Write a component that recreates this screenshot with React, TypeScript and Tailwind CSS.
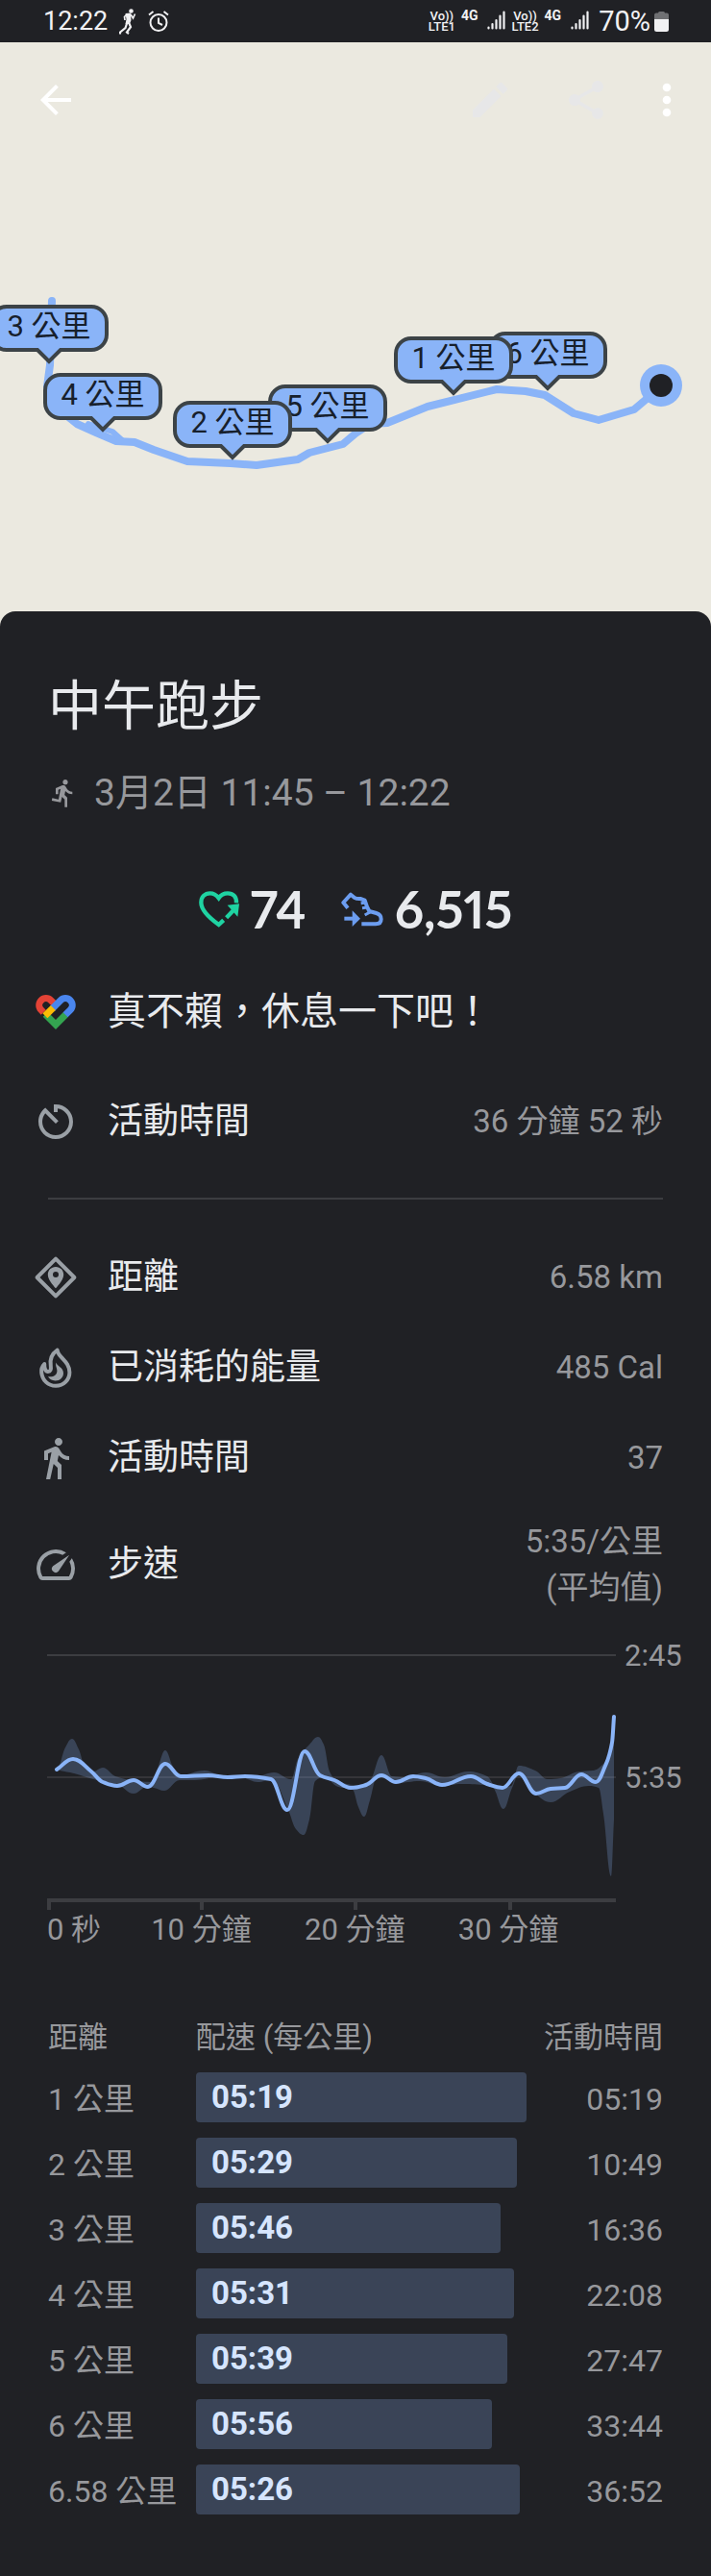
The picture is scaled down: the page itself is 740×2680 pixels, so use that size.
import { MdArrowBack, MdDirectionsRun, MdDirectionsWalk, MdEdit, MdMoreVert, MdShare, MdSpeed } from "react-icons/md";

type Point = [number, number];

// listed back to front
const markers = [
  { km: 5, x: 341, y: 462 },
  { km: 2, x: 242, y: 479 },
  { km: 6, x: 570, y: 407 },
  { km: 1, x: 472, y: 412 },
  { km: 3, x: 51, y: 379 },
  { km: 4, x: 107, y: 450 },
];

const splits = [
  { distance: "1 公里", pace: "05:19", time: "05:19", bar: 344 },
  { distance: "2 公里", pace: "05:29", time: "10:49", bar: 334 },
  { distance: "3 公里", pace: "05:46", time: "16:36", bar: 317 },
  { distance: "4 公里", pace: "05:31", time: "22:08", bar: 331 },
  { distance: "5 公里", pace: "05:39", time: "27:47", bar: 324 },
  { distance: "6 公里", pace: "05:56", time: "33:44", bar: 308 },
  { distance: "6.58 公里", pace: "05:26", time: "36:52", bar: 337 },
];
const longestBar = 344;

const paceLine: Point[] = [
  [10, 121], [27, 110], [46, 123], [58, 134], [73, 138], [90, 132], [105, 139], [123, 115], [139, 128],
  [168, 127], [188, 129], [206, 128], [233, 131], [250, 163], [268, 102], [284, 127], [299, 132], [316, 140],
  [332, 137], [348, 127], [363, 134], [381, 128], [394, 130], [411, 137], [441, 128], [458, 136], [474, 140],
  [491, 125], [509, 146], [524, 141], [539, 140], [556, 126], [571, 134], [581, 117], [588, 93], [590, 66],
];

const paceHigh: Point[] = [
  [13, 117], [19, 98], [26, 89], [33, 100], [39, 117], [48, 123], [58, 119], [71, 128], [88, 132], [111, 134],
  [116, 117], [123, 101], [131, 118], [138, 127], [164, 122], [184, 128], [218, 128], [236, 124], [254, 131],
  [261, 110], [273, 95], [282, 87], [288, 95], [294, 123], [301, 132], [321, 137], [336, 132], [348, 106],
  [359, 128], [374, 129], [394, 124], [414, 129], [438, 123], [458, 128], [468, 140], [483, 138], [491, 117],
  [508, 122], [521, 131], [534, 130], [554, 123], [568, 122], [579, 115], [590, 93],
];

const paceLow: Point[] = [
  [13, 122], [28, 125], [48, 131], [74, 137], [90, 146], [104, 139], [111, 140], [122, 143], [138, 132],
  [154, 132], [178, 129], [204, 130], [219, 134], [234, 132], [251, 163], [259, 183], [267, 189], [273, 173],
  [279, 133], [288, 129], [303, 139], [318, 142], [324, 160], [330, 170], [336, 153], [343, 130], [354, 129],
  [364, 135], [388, 133], [411, 138], [431, 136], [454, 137], [464, 140], [475, 162], [484, 140], [491, 127],
  [508, 146], [524, 155], [544, 144], [564, 138], [574, 140], [579, 167], [587, 232], [590, 173],
];

// Monotone cubic through the points, flat at every local extreme
function curve(points: Point[]) {
  const slope = (i: number) =>
    (points[i + 1][1] - points[i][1]) / (points[i + 1][0] - points[i][0] || 1);
  const tangents = points.map((_, i) => {
    if (i === 0) return slope(0);
    if (i === points.length - 1) return slope(i - 1);
    const a = slope(i - 1);
    const b = slope(i);
    return a * b <= 0 ? 0 : (2 * a * b) / (a + b);
  });
  return points
    .slice(1)
    .map(([x, y], i) => {
      const [px, py] = points[i];
      const h = (x - px) / 2.5;
      return `C${px + h},${py + tangents[i] * h} ${x - h},${y - tangents[i + 1] * h} ${x},${y}`;
    })
    .join(" ");
}

function band(high: Point[], low: Point[]) {
  const back = [...low].reverse();
  return `M${high[0].join(",")} ${curve(high)} L${back[0].join(",")} ${curve(back)}Z`;
}

const AlarmIcon = () => (
  <svg viewBox="0 0 22 22" className="size-[22px]" fill="none" stroke="currentColor" strokeWidth="2" aria-hidden="true">
    <circle cx="11" cy="12.5" r="8.5" />
    <path d="M11 7.5V13l4 2M1 4.5 5.5 1M21 4.5 16.5 1" />
  </svg>
);

const StatusRunner = () => (
  <svg viewBox="0 0 18 27" className="h-[27px] w-[18px]" fill="none" stroke="currentColor" aria-hidden="true">
    <circle cx="12.5" cy="2.5" r="2.3" fill="currentColor" stroke="none" />
    <path d="M6.500 5 12 4.500 12.500 12 11 16 6.500 16 7.500 11z" fill="currentColor" stroke="none" />
    <path d="M8 6 5.500 8.500 6 12M12 6l2.500 4 2-4.500" strokeWidth="1.700" />
    <path d="M8 15.500 6.500 20 1 24.500v2M10.500 15.500l1.500 3.500-4 5.500 2 1.500" strokeWidth="2.200" />
  </svg>
);

const SignalBars = () => (
  <svg viewBox="0 0 19 20" className="h-5 w-[19px]" stroke="currentColor" strokeWidth="2.200" strokeLinecap="round" aria-hidden="true">
    <path d="M1.500 17.500v1M5.500 14v4.500M9.500 10v8.500M13.500 5.500v13M17.500 1.500v17" />
  </svg>
);

const Sim = ({ name }: { name: string }) => (
  <div className="flex">
    <div className="text-center text-[13px] leading-[11px] font-medium">
      <div>Vo))</div>
      <div>{name}</div>
    </div>
    <div className="mr-2.5 ml-1.5 text-[14px] leading-[11px] font-bold">4G</div>
    <SignalBars />
  </div>
);

const StatusBar = () => (
  <header className="flex h-11 items-center justify-between bg-[#202125] pr-11 pl-[45px] text-[#f1f1f3]">
    <div className="flex items-center gap-3">
      <span className="text-[27px] leading-8">12:22</span>
      <span className="flex items-center gap-3">
        <StatusRunner />
        <AlarmIcon />
      </span>
    </div>
    <div className="flex items-center gap-1.5">
      <Sim name="LTE1" />
      <Sim name="LTE2" />
      <span className="ml-1 flex items-center gap-1 text-[29px] leading-8">
        70%
        <svg viewBox="0 0 15 22" className="h-[22px] w-[15px]" aria-hidden="true">
          <path d="M4 2.500Q4 1 5.500 1h4Q11 1 11 2.500h2q2 0 2 2V10H0V4.500q0-2 2-2z" fill="#6f7073" />
          <path d="M0 9h15v10.500q0 2.500-2.500 2.500h-10Q0 22 0 19.500z" fill="currentColor" />
        </svg>
      </span>
    </div>
  </header>
);

const KmMarker = ({ km, x, y }: { km: number; x: number; y: number }) => (
  <div className="absolute h-[62px] w-[124px] -translate-x-1/2 -translate-y-full" style={{ left: x, top: y - 44 }}>
    <svg viewBox="0 0 124 62" className="absolute inset-0 size-full" aria-hidden="true">
      <path
        d="M18 2H106A16 16 0 0 1 122 18V31A16 16 0 0 1 106 47H74L62 59 50 47H18A16 16 0 0 1 2 31V18A16 16 0 0 1 18 2Z"
        fill="#8ab4f8"
        stroke="#3c4347"
        strokeWidth="4"
      />
    </svg>
    <span className="relative block text-center text-[31px] leading-[46px] text-[#17202c]">{km} 公里</span>
  </div>
);

const RouteMap = () => (
  <section className="relative h-[608px] overflow-hidden bg-[#ebe9e0]" aria-label="路線">
    <svg viewBox="0 44 740 608" className="absolute top-0 left-0 h-[608px] w-[740px]" fill="none" aria-hidden="true">
      <g stroke="#8ab4f8" strokeWidth="8" strokeLinejoin="round" strokeLinecap="round">
        <path d="M54 313 53 345 52 380 49 402 60 425 80 441 100 450 121 459 140 460 160 468 195 480 240 482 267 484 310 478 322 471 357 462 370 451 385 441 403 440 445 423 517 405 547 407 567 411 597 430 623 437 660 426 673 415 688 401" />
        <path d="M92 441 117 449 127 458" strokeWidth="6" />
      </g>
      <circle cx="688" cy="401" r="22" fill="#8ab4f8" />
      <circle cx="688" cy="401" r="12" fill="#202125" />
    </svg>
    {markers.map((marker) => (
      <KmMarker key={marker.km} {...marker} />
    ))}
    <nav className="relative flex items-center justify-between pt-[34px] pr-5 pl-[34px] text-white">
      <button type="button" aria-label="返回">
        <MdArrowBack className="size-12" />
      </button>
      <div className="flex items-center gap-[34px]">
        <div className="flex items-center gap-[52px] text-[#e7e7e8]">
          <button type="button" aria-label="編輯">
            <MdEdit className="size-12" />
          </button>
          <button type="button" aria-label="分享">
            <MdShare className="size-12" />
          </button>
        </div>
        <button type="button" aria-label="更多">
          <MdMoreVert className="size-[52px]" />
        </button>
      </div>
    </nav>
  </section>
);

const HeartPointsIcon = () => (
  <svg viewBox="0 0 126 114" className="h-[38px] w-[42px]" fill="none" stroke="#1fd3a2" strokeWidth="13" aria-hidden="true">
    <path d="M117 37C118 17 106 7 90 7C78 7 68 13 62 22C55 13 46 7 35 7C18 7 7 19 7 36C7 60 30 82 62 105L77 91" />
    <path d="M86 83 108 60" />
    <path d="M89 44 126 40 121 80z" fill="#1fd3a2" stroke="none" />
  </svg>
);

const StepsIcon = () => (
  <svg viewBox="0 0 132 108" className="h-9 w-11" fill="none" stroke="#6c9df0" strokeWidth="12" strokeLinejoin="round" aria-hidden="true">
    <path d="M21 50 7 33 30 8 42 18Q50 22 60 21L74 26 81 46 88 60 110 66Q125 70 125 85Q125 100 108 100H64" />
    <path d="M62 35 78 33M66 50 82 48M74 72 92 62" strokeWidth="9" />
    <path d="M10 83h30" />
    <path d="M35 58v50l25-25z" fill="#6c9df0" stroke="none" />
  </svg>
);

const FitIcon = () => (
  <svg viewBox="0 0 124 107" className="mx-[3px] h-9 w-[42px]" fill="none" strokeWidth="21" aria-hidden="true">
    <path d="M24 54 17 47A21 21 0 0 1 47 17L62 32" stroke="#e34336" />
    <path d="M30 60 62 92 93 61" stroke="#34a450" />
    <path d="M92 62 107 47A21 21 0 0 0 77 17L52 42" stroke="#4a86ee" />
    <path d="M54 40 29 65" stroke="#fbbc05" />
  </svg>
);

const TimerIcon = () => (
  <svg viewBox="0 0 24 24" className="size-12" fill="currentColor" aria-hidden="true">
    <path d="M11 3v4h2V5.080c3.390.49 6 3.390 6 6.920 0 3.870-3.130 7-7 7s-7-3.130-7-7c0-1.680.59-3.220 1.580-4.420L12 13l1.410-1.410-6.800-6.800v.02C4.420 6.450 3 9.050 3 12c0 4.970 4.020 9 9 9a9 9 0 0 0 0-18h-1z" />
  </svg>
);

const DistanceIcon = () => (
  <svg viewBox="0 0 24 24" className="size-12" aria-hidden="true">
    <path d="M12 2.300 21.700 12 12 21.700 2.300 12z" fill="none" stroke="currentColor" strokeWidth="2" strokeLinejoin="round" />
    <path
      d="M12 6.500c-2.400 0-4.100 1.800-4.100 4.100 0 2.900 4.100 7 4.100 7s4.100-4.100 4.100-7c0-2.300-1.700-4.100-4.100-4.100zm0 5.500a1.500 1.500 0 1 1 0-3 1.500 1.500 0 0 1 0 3z"
      fill="currentColor"
    />
  </svg>
);

const EnergyIcon = () => (
  <svg viewBox="0 0 24 24" className="size-12" aria-hidden="true">
    <path
      d="M12.800 2.800C9.300 5.200 8.900 8 9.400 11c.3 2-.2 3-1.400 3s-2-1.500-1.900-4C4.700 11.500 4.400 13 4.600 14.500 5 18.500 8 21.400 12 21.400c4.200 0 7.200-3.200 7.200-7 0-3.500-2-5.500-3.800-7.400C13.800 5.500 13 4.300 12.800 2.800z"
      fill="none"
      stroke="currentColor"
      strokeWidth="2"
      strokeLinejoin="round"
    />
    <path
      d="M12.200 9.300c.3 1.800 3.800 2.600 3.800 5.400 0 2.300-1.800 4-4.200 4-1.800 0-3.200-.9-3.800-2.200 2.600.5 4.600-.7 4.700-2.800.1-1.500-1-2.500-.5-4.400z"
      fill="currentColor"
    />
  </svg>
);

const metrics = [
  { icon: <DistanceIcon />, label: "距離", value: "6.58 km" },
  { icon: <EnergyIcon />, label: "已消耗的能量", value: "485 Cal" },
  { icon: <MdDirectionsWalk className="size-12" />, label: "活動時間", value: "37" },
];

const MetricRow = ({ icon, label, children }: { icon: React.ReactNode; label: string; children: React.ReactNode }) => (
  <div className="flex min-h-[94px] items-center gap-[30px] pr-[50px] pl-[34px]">
    <span className="shrink-0 text-[#9aa0a6]">{icon}</span>
    <span className="flex-1 text-[37px] leading-[48px] text-[#e8eaed]">{label}</span>
    <span className="text-right text-[33px] leading-[48px] text-[#97989c]">{children}</span>
  </div>
);

const PaceChart = () => (
  <div className="mt-3.5 flex pl-[49px] text-[31px] leading-8 text-[#97989c]">
    <div className="flex-1">
      <svg viewBox="0 -14 592 282" preserveAspectRatio="none" className="h-[282px] w-full" fill="none" role="img" aria-label="步速">
        <path d="M0 2H592" stroke="#3c3d41" strokeWidth="2" />
        <path d="M0 129H592" stroke="#4a4b4f" strokeWidth="1" />
        <path d="M0 257H592" stroke="#3c3d41" strokeWidth="4" />
        <path d="M2 257v10M161 257v10M321 257v10M482 257v10" stroke="#3c3d41" strokeWidth="4" />
        <path d={band(paceHigh, paceLow)} fill="#8ab4f8" fillOpacity="0.24" />
        <path d={`M${paceLine[0].join(",")} ${curve(paceLine)}`} stroke="#8ab4f8" strokeWidth="4" strokeLinecap="round" strokeLinejoin="round" />
      </svg>
      <div className="mt-1 flex whitespace-nowrap">
        <span className="w-[13.6%]">0 秒</span>
        <span className="w-[27%] text-center">10 分鐘</span>
        <span className="w-[27%] text-center">20 分鐘</span>
        <span className="w-[27%] text-center">30 分鐘</span>
      </div>
    </div>
    <div className="flex w-[99px] flex-col gap-[95px] pt-px pl-[9px]">
      <span>2:45</span>
      <span>5:35</span>
    </div>
  </div>
);

const SplitsTable = () => (
  <div className="mt-[68px] px-[50px] pb-14">
    <table className="w-full table-fixed text-[32px] leading-9 text-[#97989c]">
      <thead>
        <tr className="h-14 text-[31px] whitespace-nowrap">
          <th className="w-[154px] text-left font-normal">距離</th>
          <th className="text-left font-normal">配速 (每公里)</th>
          <th className="w-[142px] text-right font-normal">活動時間</th>
        </tr>
      </thead>
      <tbody>
        {splits.map((split) => (
          <tr key={split.distance} className="h-[68px]">
            <td className="pt-1 whitespace-nowrap">{split.distance}</td>
            <td>
              <div
                className="flex h-[52px] items-center rounded-[4px] bg-[#3a4457] pl-4 text-[33px] font-bold text-[#d6e5fd]"
                style={{ width: `${(split.bar / longestBar) * 100}%` }}
              >
                {split.pace}
              </div>
            </td>
            <td className="pt-1 text-right">{split.time}</td>
          </tr>
        ))}
      </tbody>
    </table>
  </div>
);

const App = () => {
  return (
    <div className="min-h-screen bg-[#202125] font-[Roboto,'Noto_Sans_CJK_TC',sans-serif]" lang="zh-Hant">
      <StatusBar />
      <RouteMap />
      <main className="relative -mt-4 rounded-t-2xl bg-[#202125] pt-[67px]">
        <h1 className="px-[50px] text-[56px] leading-[64px] text-[#e8eaed]">中午跑步</h1>
        <p className="mt-[34px] flex items-center gap-4 px-[50px] text-[39px] leading-[48px] text-[#97989c]">
          <MdDirectionsRun className="size-8" />
          3月2日 11:45 – 12:22
        </p>

        <div className="mt-[65px] flex items-center justify-center gap-9 font-[Lato,sans-serif] text-[53px] leading-[64px] font-bold text-[#e8eaed] proportional-nums">
          <div className="flex items-center gap-3">
            <HeartPointsIcon />
            74
          </div>
          <div className="flex items-center gap-3">
            <StepsIcon />
            6,515
          </div>
        </div>

        <div className="mt-7 flex min-h-[94px] items-center gap-[30px] pr-[50px] pl-[34px]">
          <FitIcon />
          <span className="text-[40px] leading-[48px] text-[#e8eaed]">真不賴，休息一下吧！</span>
        </div>
        <div className="mt-5">
          <MetricRow icon={<TimerIcon />} label="活動時間">36 分鐘 52 秒</MetricRow>
        </div>
        <hr className="mx-[50px] mt-8 mb-[34px] border-t-2 border-[#3c3d41]" />
        {metrics.map(({ icon, label, value }, index) => (
          <MetricRow key={index} icon={icon} label={label}>
            {value}
          </MetricRow>
        ))}
        <div className="py-4">
          <MetricRow icon={<MdSpeed className="size-12" />} label="步速">
            5:35/公里
            <br />
            (平均值)
          </MetricRow>
        </div>

        <PaceChart />
        <SplitsTable />
      </main>
    </div>
  );
};

export default App;
